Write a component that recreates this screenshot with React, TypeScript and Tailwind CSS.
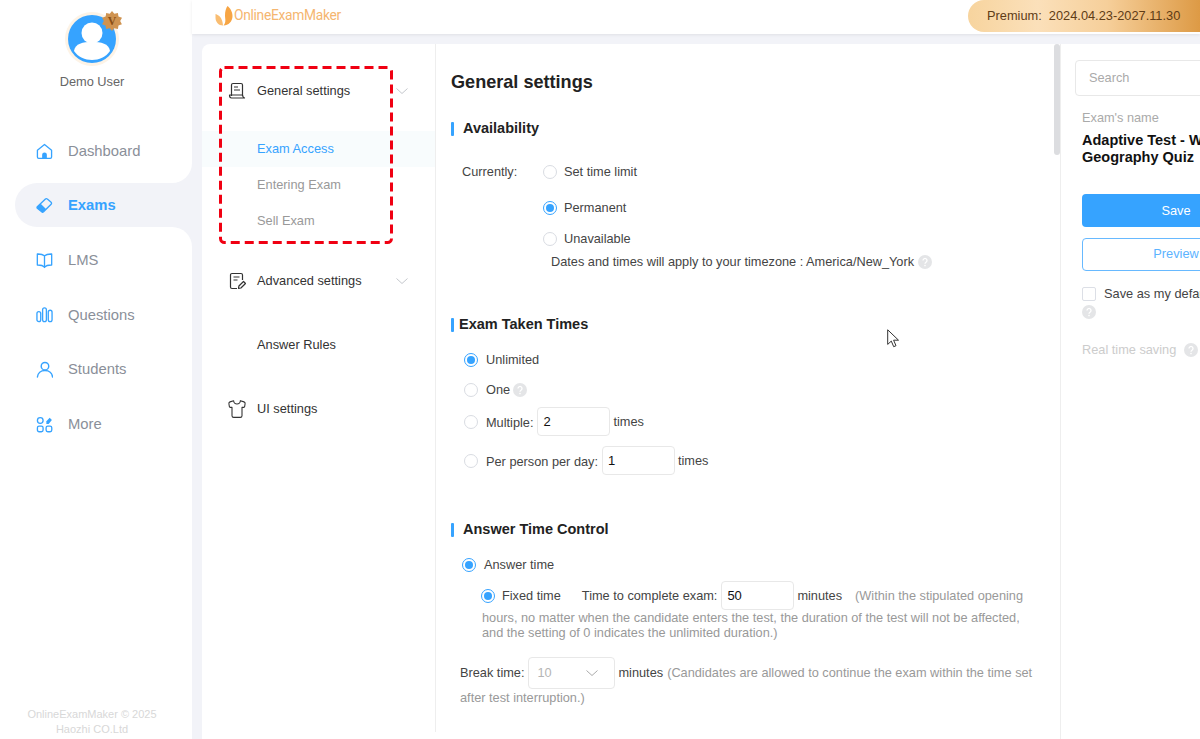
import React from "react";
import { Shirt } from "lucide-react";

const Help = ({ s = 14 }: { s?: number }) => (
  <svg width={s} height={s} viewBox="0 0 14 14" className="shrink-0">
    <circle cx="7" cy="7" r="7" fill="#e4e5e7" />
    <path d="M5 5.4a2 2 0 1 1 3 1.8c-.7.4-1 .8-1 1.5" fill="none" stroke="#fff" strokeWidth="1.3" />
    <circle cx="7" cy="10.6" r=".8" fill="#fff" />
  </svg>
);

const Radio = ({ on = false }: { on?: boolean }) =>
  on ? (
    <span className="w-[14px] h-[14px] rounded-full border border-[#36a3ff] bg-white flex items-center justify-center shrink-0">
      <span className="w-[8px] h-[8px] rounded-full bg-[#36a3ff]" />
    </span>
  ) : (
    <span className="w-[14px] h-[14px] rounded-full border border-[#d9dce2] bg-white shrink-0" />
  );

const Heading = ({ children, gap }: { children: React.ReactNode; gap: string }) => (
  <div className={`flex items-center h-[20px] text-[14.5px] font-bold text-[#222] ${gap}`}>
    <span className="w-[3px] h-[14px] rounded-[1px] bg-[#36a3ff]" />
    {children}
  </div>
);

const NumBox = ({ v }: { v: string }) => (
  <span className="w-[73px] h-[29px] rounded-[4px] border border-[#e8e8e8] bg-white flex items-center pl-[5px] text-[13px] text-[#111] shrink-0">
    {v}
  </span>
);

const icon = "w-[17px] h-[17px] shrink-0";
const NavIcons: Record<string, React.ReactNode> = {
  Dashboard: (
    <svg viewBox="0 0 18 18" className={icon} fill="none" stroke="#36a3ff" strokeWidth="1.4" strokeLinejoin="round">
      <path d="M1.5 7.6 9 1.6l7.5 6v7.2a1.4 1.4 0 0 1-1.4 1.4H2.9a1.4 1.4 0 0 1-1.4-1.4z" />
      <path d="M6.5 16v-3.5a2.5 2.5 0 0 1 5 0V16z" fill="#36a3ff" stroke="none" />
    </svg>
  ),
  Exams: (
    <svg viewBox="0 0 18 18" className={icon} fill="none" stroke="#36a3ff" strokeWidth="1.4" strokeLinejoin="round">
      <path d="M1.4 10.4 10 2.2a1.5 1.5 0 0 1 2 0l4 3.4a1.4 1.4 0 0 1 0 2.1l-8 8a1.5 1.5 0 0 1-2 0l-4.600-3.700a1.100 1.100 0 0 1 0-1.600z" />
      <path d="M1.400 10.400 5 7.200l5.600 5.500L8 15.700a1.500 1.500 0 0 1-2 0l-4.600-3.700a1.100 1.100 0 0 1 0-1.600z" fill="#36a3ff" stroke="none" />
    </svg>
  ),
  LMS: (
    <svg viewBox="0 0 18 18" className={icon} fill="none" stroke="#36a3ff" strokeWidth="1.4" strokeLinejoin="round">
      <path d="M9 4C7.500 2.700 5 2 1.400 2.100v11.700C5 13.700 7.500 14.400 9 15.800c1.500-1.400 4-2.100 7.600-2V2.100C13 2 10.500 2.700 9 4z" />
      <path d="M9 4v13" />
    </svg>
  ),
  Questions: (
    <svg viewBox="0 0 18 18" className={icon} fill="none" stroke="#36a3ff" strokeWidth="1.4">
      <rect x="1" y="6" width="4" height="10.500" rx="2" />
      <rect x="7" y="2" width="4" height="14.500" rx="2" />
      <rect x="13" y="4.500" width="4" height="12" rx="2" />
    </svg>
  ),
  Students: (
    <svg viewBox="0 0 18 18" className={icon} fill="none" stroke="#36a3ff" strokeWidth="1.5">
      <circle cx="9.500" cy="5.500" r="4" />
      <path d="M1.500 17c.4-4.200 3.600-7 8-7s7.600 2.800 8 7" strokeLinecap="round" />
    </svg>
  ),
  More: (
    <svg viewBox="0 0 18 18" className={icon} fill="none" stroke="#36a3ff" strokeWidth="1.4">
      <circle cx="4.500" cy="4.800" r="3" />
      <rect x="1.500" y="10.700" width="6" height="6" rx="1.800" />
      <rect x="10.700" y="10.700" width="6" height="6" rx="1.800" />
      <path d="M11 8.400V5.600l3.500-3.700 2.300 2.300-3.400 4.200z" fill="#36a3ff" stroke="none" />
    </svg>
  ),
};

const NavRow = ({ name }: { name: string }) => (
  <div className="h-[54.600px] flex items-center pl-[36px] gap-[15px] text-[14.800px] text-[#8a8f99] bg-white">
    {NavIcons[name]}
    <span>{name}</span>
  </div>
);

export default function App() {
  return (
    <div
      className="relative w-[1200px] h-[739px] overflow-hidden flex bg-[#f2f3f8]"
      style={{ fontFamily: '"Liberation Sans", Arial, sans-serif' }}
    >
      {/* sidebar */}
      <aside className="w-[192px] h-full shrink-0 flex flex-col bg-white">
        <div className="h-[124px] flex flex-col items-center pt-[12px] pr-[8px] shrink-0">
          <div className="relative w-[54px] h-[54px] rounded-full bg-[#fdf3e6] flex items-center justify-center">
            <svg viewBox="0 0 48 48" className="w-[48px] h-[48px]">
              <circle cx="24" cy="24" r="24" fill="#36a3ff" />
              <circle cx="24" cy="18" r="10.500" fill="#fff" />
              <path d="M6 36c1-7.500 9-9 18-9s17 1.500 18 9c-4 6-11 9-18 9S10 42 6 36z" fill="#fff" />
            </svg>
            <svg viewBox="0 0 22 22" className="absolute -top-[1px] -right-[3px] w-[20px] h-[20px]">
              <path d="M11 0l2.600 3 3.900-.9.600 3.900 3.900 1.500L20 11l1.900 3.500-3.800 1.500-.6 3.900-3.900-.9L11 22l-2.600-3-3.900.9-.6-3.900L.1 14.500 2 11 .1 7.500 4 6l.6-3.900 3.900.9z" fill="#cf9350" />
              <text x="11" y="15.500" textAnchor="middle" fontSize="13" fontWeight="700" fill="#8a4d12" fontFamily="Liberation Serif">V</text>
            </svg>
          </div>
          <div className="mt-[6px] text-[12.800px] text-[#666]">Demo User</div>
        </div>
        <div className="bg-[#f2f3f8] shrink-0">
          <div className="h-[59px] rounded-br-[20px] bg-white flex items-center pl-[36px] gap-[15px] pb-[4px] text-[14.800px] text-[#8a8f99]">
            {NavIcons.Dashboard}
            <span>Dashboard</span>
          </div>
        </div>
        <div className="bg-white shrink-0">
          <div className="ml-[15px] h-[44px] rounded-l-[22px] bg-[#f2f3f8] flex items-center pl-[21px] pt-[1px] gap-[15px] text-[14.800px] font-bold text-[#36a3ff]">
            {NavIcons.Exams}
            <span>Exams</span>
          </div>
        </div>
        <div className="bg-[#f2f3f8] shrink-0">
          <div className="h-[60.600px] rounded-tr-[20px] bg-white flex items-center pl-[36px] gap-[15px] pt-[6px] pb-[0.600px] text-[14.800px] text-[#8a8f99]">
            {NavIcons.LMS}
            <span>LMS</span>
          </div>
        </div>
        <NavRow name="Questions" />
        <NavRow name="Students" />
        <NavRow name="More" />
        <div className="mt-auto pb-[2px] pr-[8px] text-center text-[11px] leading-[15px] text-[#d8d8d8]">
          OnlineExamMaker © 2025
          <br />
          Haozhi CO.Ltd
        </div>
      </aside>

      <div className="flex-1 flex flex-col min-w-0">
        {/* top bar */}
        <header className="h-[34px] shrink-0 bg-white shadow-[0_1px_3px_rgba(0,0,0,0.08)] flex items-start justify-between pl-[23px]">
          <div className="flex items-center h-[30px] gap-[1px]">
            <svg viewBox="0 0 18 20" className="w-[18px] h-[20px] mt-[1px]">
              <path d="M12.500 0c2.500 2 5 5.500 5 10 0 5.500-4 9.500-9 9.500 3-3 1.500-7 1.500-10 0-4 1-7.500 2.500-9.500z" fill="#f7a544" />
              <path d="M.500 8c3.500 1 7 4 7.500 11.500C3.500 19.500.500 16 .500 11.500z" fill="#f9bd72" />
            </svg>
            <span className="text-[13.800px] tracking-[-0.300px] text-[#f5b670]" style={{ fontFamily: "Roboto, sans-serif" }}>
              OnlineExamMaker
            </span>
          </div>
          <div className="w-[232px] h-[32px] rounded-bl-[16px] rounded-tl-[16px] flex items-center pl-[19px] text-[12.800px] text-[#5f3c16] whitespace-pre bg-[linear-gradient(90deg,#f7d49e_0%,#fbe0ba_30%,#f6cf9a_60%,#dd9a45_100%)]">
            {"Premium:  2024.04.23-2027.11.30"}
          </div>
        </header>

        <div className="flex-1 min-h-0 flex ml-[10px] mt-[10px]">
          {/* settings menu */}
          <nav className="w-[233px] shrink-0 bg-white rounded-tl-[8px] text-[12.800px] text-[#333]">
            <div className="h-[87px] flex items-center pl-[26px] pr-[27px] pt-[6px]">
              <svg viewBox="0 0 18 18" className="w-[18px] h-[18px] shrink-0" fill="none" stroke="#333" strokeWidth="1.200" strokeLinejoin="round">
                <path d="M3.500 14V3a1.500 1.500 0 0 1 1.500-1.500h8A1.500 1.500 0 0 1 14.500 3v11" />
                <path d="M6 5h4M6 8h6" />
                <path d="M3.500 13H1.500c0 2 .7 3 2 3h13c-1-.4-2-1.400-2-3z" />
              </svg>
              <span className="ml-[11px]">General settings</span>
              <svg viewBox="0 0 12 6" className="w-[12px] h-[6px] ml-auto" fill="none" stroke="#c4c7cc" strokeWidth="1">
                <path d="M.5.500 6 5.500l5.500-5" />
              </svg>
            </div>
            <div className="h-[36px] flex items-center pl-[55px] bg-[#f8fcfd] text-[#36a3ff]">Exam Access</div>
            <div className="h-[36px] flex items-center pl-[55px] text-[#999]">Entering Exam</div>
            <div className="h-[36px] flex items-center pl-[55px] text-[#999]">Sell Exam</div>
            <div className="h-[49px] mt-[17px] flex items-center pl-[26px] pr-[27px]">
              <svg viewBox="0 0 18 18" className="w-[18px] h-[18px] shrink-0" fill="none" stroke="#333" strokeWidth="1.200" strokeLinejoin="round">
                <path d="M14.500 8V3A1.500 1.500 0 0 0 13 1.500H4A1.500 1.500 0 0 0 2.500 3v12A1.500 1.500 0 0 0 4 16.500h5" />
                <path d="M5.500 5h6M5.500 8h4" />
                <path d="m10.500 16.500.4-2.500 4.600-4.500 2 2-4.600 4.500z" />
              </svg>
              <span className="ml-[11px]">Advanced settings</span>
              <svg viewBox="0 0 12 6" className="w-[12px] h-[6px] ml-auto" fill="none" stroke="#c4c7cc" strokeWidth="1">
                <path d="M.5.500 6 5.500l5.500-5" />
              </svg>
            </div>
            <div className="h-[40px] mt-[20px] flex items-center pl-[55px]">Answer Rules</div>
            <div className="h-[40px] mt-[24px] flex items-center pl-[25px]">
              <Shirt className="w-[20px] h-[20px] shrink-0" strokeWidth={1.300} color="#333" />
              <span className="ml-[10px]">UI settings</span>
            </div>
          </nav>
          <div className="w-px bg-white shrink-0">
            <div className="h-[688px] bg-[#eeeeee]" />
          </div>

          {/* main content */}
          <main className="w-[617px] shrink-0 bg-white pl-[15px] overflow-hidden text-[12.750px] text-[#444]">
            <h1 className="mt-[27px] h-[22px] leading-[22px] text-[18.100px] font-bold text-[#222]">General settings</h1>

            <div className="mt-[26px]">
              <Heading gap="gap-[9px]">Availability</Heading>
            </div>

            <div className="mt-[23px] flex items-center h-[20px] pl-[11px]">
              <span className="w-[81px]">Currently:</span>
              <Radio />
              <span className="ml-[7px]">Set time limit</span>
            </div>
            <div className="mt-[16px] flex items-center h-[20px] pl-[92px]">
              <Radio on />
              <span className="ml-[7px]">Permanent</span>
            </div>
            <div className="mt-[11px] flex items-center h-[20px] pl-[92px]">
              <Radio />
              <span className="ml-[7px]">Unavailable</span>
            </div>
            <div className="mt-[3px] flex items-center h-[20px] pl-[100px] gap-[4px]">
              <span>Dates and times will apply to your timezone : America/New_York</span>
              <Help />
            </div>

            <div className="mt-[43px]">
              <Heading gap="gap-[5px]">Exam Taken Times</Heading>
            </div>

            <div className="mt-[15px] flex items-center h-[20px] pl-[13px]">
              <Radio on />
              <span className="ml-[8px]">Unlimited</span>
            </div>
            <div className="mt-[10px] flex items-center h-[20px] pl-[13px]">
              <Radio />
              <span className="ml-[8px] mr-[3px]">One</span>
              <Help />
            </div>
            <div className="mt-[7px] flex items-center h-[29px] pl-[13px]">
              <Radio />
              <span className="ml-[8px] pt-[2px]">Multiple:</span>
              <span className="ml-[4px]"><NumBox v="2" /></span>
              <span className="ml-[3px]">times</span>
            </div>
            <div className="mt-[10px] flex items-center h-[29px] pl-[13px]">
              <Radio />
              <span className="ml-[8px] pt-[2px]">Per person per day:</span>
              <span className="ml-[4px]"><NumBox v="1" /></span>
              <span className="ml-[3px]">times</span>
            </div>

            <div className="mt-[45px]">
              <Heading gap="gap-[9px]">Answer Time Control</Heading>
            </div>

            <div className="mt-[15px] flex items-center h-[20px] pl-[11px]">
              <Radio on />
              <span className="ml-[8px]">Answer time</span>
            </div>
            <div className="mt-[6px] flex items-center h-[29px] pl-[30px] whitespace-nowrap">
              <Radio on />
              <span className="ml-[7px]">Fixed time</span>
              <span className="ml-[21px]">Time to complete exam:</span>
              <span className="ml-[4px]"><NumBox v="50" /></span>
              <span className="ml-[3px]">minutes</span>
              <span className="ml-[13px] text-[12.750px] text-[#999]">(Within the stipulated opening</span>
            </div>
            <p className="pl-[31px] text-[12.750px] leading-[15px] text-[#999] whitespace-nowrap">
              hours, no matter when the candidate enters the test, the duration of the test will not be affected,
              <br />
              and the setting of 0 indicates the unlimited duration.)
            </p>

            <div className="mt-[16px] flex items-center h-[33px] pl-[9px] whitespace-nowrap">
              <span>Break time:</span>
              <span className="ml-[4px] w-[87px] h-[32px] rounded-[4px] border border-[#e8e8e8] flex items-center pl-[8px] pr-[16px] justify-between text-[#b5b5b5] shrink-0">
                10
                <svg viewBox="0 0 12 6" className="w-[12px] h-[6px]" fill="none" stroke="#aaa" strokeWidth="1">
                  <path d="M.5.500 6 5.500l5.500-5" />
                </svg>
              </span>
              <span className="ml-[3px]">minutes</span>
              <span className="ml-[4px] text-[12.750px] text-[#999]">(Candidates are allowed to continue the exam within the time set</span>
            </div>
            <p className="mt-[1px] pl-[9px] text-[12.750px] leading-[15px] text-[#999]">after test interruption.)</p>
          </main>

          {/* scrollbar */}
          <div className="w-[7px] shrink-0 bg-white">
            <div className="ml-[1px] w-[6px] h-[111px] rounded-[3px] bg-[#dcdde0]" />
          </div>

          {/* right panel */}
          <div className="flex-1 min-w-0 overflow-hidden bg-white border-l border-[#eeeeee]">
            <div className="w-[220px] pl-[14px] text-[12.800px]">
              <div className="mt-[16px] h-[36px] w-[205px] rounded-[4px] border border-[#e8e8e8] flex items-center pl-[13px] text-[12.750px] text-[#aaa]">
                Search
              </div>
              <div className="pl-[7px]">
                <div className="mt-[14px] text-[12.750px] leading-[16px] text-[#aaa]">Exam's name</div>
                <div className="mt-[6px] w-[190px] text-[14.500px] leading-[16.500px] font-bold text-[#111]">
                  Adaptive Test - World Geography Quiz
                </div>
                <div className="mt-[29px] w-[188px] h-[33px] rounded-[4px] bg-[#36a3ff] flex items-center justify-center text-white">Save</div>
                <div className="mt-[11px] w-[188px] h-[33px] rounded-[4px] border border-[#67b9ff] flex items-center justify-center pb-[1px] text-[#5cb3ff]">Preview</div>
                <div className="mt-[16px] flex items-center h-[14px] whitespace-nowrap text-[#444]">
                  <span className="w-[14px] h-[14px] border border-[#dcdfe6] rounded-[2px] shrink-0" />
                  <span className="ml-[8px]">Save as my default settings</span>
                </div>
                <div className="mt-[4px]"><Help /></div>
                <div className="mt-[23px] flex items-center h-[16px] gap-[8px] whitespace-nowrap text-[12.750px] text-[#ccc]">
                  Real time saving <Help />
                </div>
              </div>
            </div>
          </div>
        </div>
      </div>

      {/* red annotation */}
      <svg className="absolute left-[218px] top-[65px] w-[176px] h-[180px]" viewBox="0 0 176 180" fill="none">
        <rect x="2.500" y="2.500" width="171" height="175" rx="4" stroke="#f00012" strokeWidth="3" strokeDasharray="9 5" />
      </svg>

      {/* mouse cursor */}
      <svg className="absolute left-[887px] top-[329px] w-[13px] h-[19px]" viewBox="0 0 13 19">
        <path d="M.700.800v14.600l3.600-3.300 2.400 5.600 2.300-1-2.400-5.500h4.900z" fill="#fff" stroke="#333" strokeWidth="1" strokeLinejoin="round" />
      </svg>
    </div>
  );
}
